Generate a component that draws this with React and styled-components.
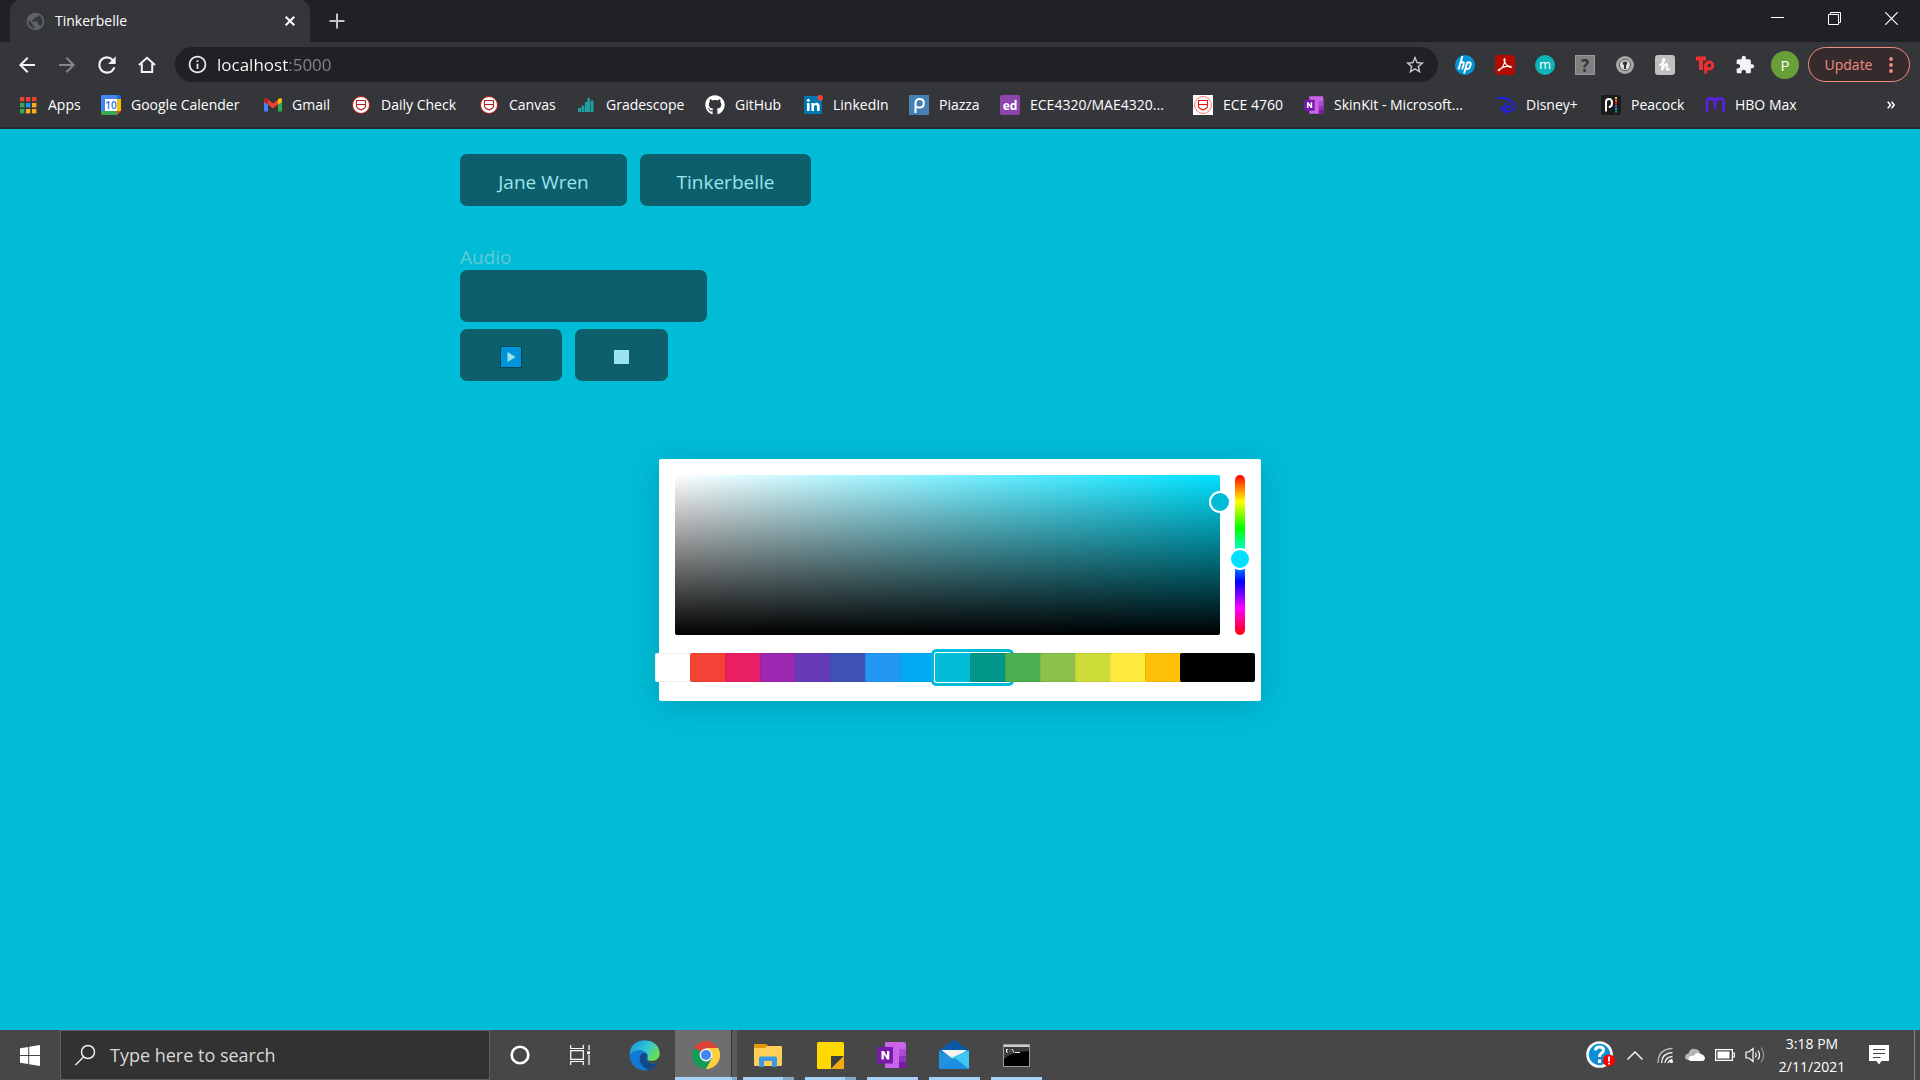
import React, { useState } from "react";
import styled, { createGlobalStyle, css } from "styled-components";
import { FaGithub } from "react-icons/fa";
import {
  MdArrowBack,
  MdArrowForward,
  MdExtension,
  MdInfoOutline,
  MdPublic,
  MdRefresh,
  MdStarBorder,
} from "react-icons/md";

const Global = createGlobalStyle`
  *, *::before, *::after { box-sizing: border-box; }
  html, body, #root { height: 100%; }
  body { margin: 0; background: #00bcd7; }
  body, button, input { font-family: "Open Sans", "Noto Sans", sans-serif; }
  svg { display: block; flex: none; }
`;

const Screen = styled.div`
  display: flex;
  flex-direction: column;
  min-height: 100%;
`;

const bareButton = css`
  display: flex;
  align-items: center;
  justify-content: center;
  flex: none;
  border: 0;
  padding: 0;
  background: none;
  color: inherit;
`;

/* ---------- browser frame ---------- */

const TabStrip = styled.header`
  display: flex;
  align-items: stretch;
  height: 42px;
  padding-left: 10px;
  background: #202124;
  color: #fff;
`;

const Tab = styled.div`
  display: flex;
  align-items: center;
  width: 300px;
  padding: 0 8px 0 15px;
  border-radius: 10px 10px 0 0;
  background: #35363a;
  color: #5f6368;
`;

const TabTitle = styled.span`
  flex: 1;
  margin-left: 9px;
  font-size: 14px;
  line-height: 20px;
  color: #fff;
`;

const IconButton = styled.button`
  ${bareButton}
  width: ${(p) => p.$width}px;
  height: ${(p) => p.$height || p.$width}px;
  color: ${(p) => p.$color || "#f1f3f4"};
`;

const WindowButtons = styled.div`
  display: flex;
  margin-left: auto;
`;

const Toolbar = styled.div`
  display: flex;
  align-items: center;
  height: 45px;
  padding: 0 10px 0 7px;
  background: #35363a;
`;

const AddressBar = styled.label`
  display: flex;
  flex: 1;
  align-items: center;
  height: 35px;
  margin: 0 7px 0 8px;
  padding: 0 3px 0 12px;
  border-radius: 18px;
  background: #202124;
  color: #e8eaed;
`;

const AddressInput = styled.input`
  flex: 1;
  min-width: 0;
  margin-left: 9px;
  padding: 0;
  border: 0;
  outline: 0;
  color: #fff;
  font-size: 17px;
  line-height: 24px;
  background: linear-gradient(90deg, #fff 71px, #85888c 71px);
  background-clip: text;
  -webkit-background-clip: text;
  -webkit-text-fill-color: transparent;
`;

const Avatar = styled.span`
  display: flex;
  align-items: center;
  justify-content: center;
  width: 28px;
  height: 28px;
  border-radius: 50%;
  background: #689f38;
  color: #fff;
  font-size: 15px;
`;

const UpdateButton = styled.button`
  ${bareButton}
  gap: 17px;
  width: 102px;
  height: 35px;
  margin-left: 3px;
  border: 1px solid #f28b82;
  border-radius: 18px;
  background: #352b2d;
  color: #f28b82;
  font-size: 14px;
  font-weight: 500;
`;

const Bookmarks = styled.nav`
  display: flex;
  align-items: center;
  gap: 20px;
  height: 42px;
  padding: 0 17px 4px 18px;
  background: #35363a;
  border-bottom: 2px solid #292a2d;
`;

const Bookmark = styled.a`
  display: flex;
  align-items: center;
  gap: 10px;
  flex: none;
  color: #fff;
  font-size: 14px;
  line-height: 20px;
  text-decoration: none;
  white-space: nowrap;
`;

const BookmarkLabel = styled.span`
  width: ${(p) => p.$width}px;
`;

const More = styled.button`
  ${bareButton}
  width: 24px;
  height: 24px;
  margin-left: auto;
  color: #fff;
`;

/* ---------- page ---------- */

const Page = styled.main`
  flex: 1;
  width: 100%;
  max-width: 1000px;
  margin: 0 auto;
  padding: 25px 0;
`;

const ButtonRow = styled.div`
  display: flex;
  gap: 13px;
  margin-top: ${(p) => p.$top || 0}px;
`;

const ActionButton = styled.button`
  ${bareButton}
  width: ${(p) => p.$width}px;
  height: 52px;
  padding-top: 4px;
  border-radius: 7px;
  background: #0d5f6c;
  color: #99e4ef;
  font-size: 19px;
  font-weight: 500;
`;

const AudioField = styled.label`
  display: block;
  width: 247px;
  margin-top: 38px;
  color: #66c8d3;
  font-size: 19px;
  font-weight: 500;
  line-height: 26px;
`;

const AudioInput = styled.input`
  display: block;
  width: 100%;
  height: 52px;
  padding: 0 20px;
  border: 0;
  border-radius: 7px;
  outline: 0;
  background: #0d5f6c;
  color: #99e4ef;
  font-size: 19px;
`;

const Picker = styled.section`
  width: 602px;
  margin: 78px auto 0;
  padding: 16px 16px 19px;
  border-radius: 2px;
  background: #fff;
  box-shadow: 0 5px 32px rgba(0, 20, 40, 0.16);
`;

const PickerTop = styled.div`
  display: flex;
  gap: 15px;
`;

const Palette = styled.div`
  position: relative;
  width: 545px;
  height: 160px;
  border-radius: 2px;
  background: linear-gradient(to top, #000, transparent),
    linear-gradient(to right, #fff, #00e1ff);
`;

const Handle = styled.span`
  position: absolute;
  left: 100%;
  top: 17%;
  width: 22px;
  height: 22px;
  border: 2px solid #fff;
  border-radius: 50%;
  background: #00bcd7;
  transform: translate(-50%, -50%);
`;

const HueSlider = styled.input`
  writing-mode: vertical-lr;
  appearance: none;
  width: 10px;
  height: 160px;
  margin: 0;
  border-radius: 5px;
  background: linear-gradient(#f00, #ff0, #0f0, #0ff, #00f, #f0f, #f00);
  &::-webkit-slider-runnable-track {
    width: 10px;
  }
  &::-webkit-slider-thumb {
    appearance: none;
    width: 22px;
    height: 22px;
    margin-left: -6px;
    border: 2px solid #fff;
    border-radius: 50%;
    background: #00e1ff;
  }
`;

const Swatches = styled.div`
  display: flex;
  margin: 18px 4px 0 -20px;
`;

const Swatch = styled.button`
  flex: none;
  width: 75px;
  height: 29px;
  margin-right: -40px;
  padding: 0;
  border: 0;
  border-radius: 2px;
  background: ${(p) => p.$color};
  box-shadow: ${(p) =>
    p.$active
      ? `0 0 0 1px #fff, 0 0 0 4px ${p.$color}`
      : "inset 0 0 0 1px rgba(0, 0, 0, 0.06)"};
`;

/* ---------- taskbar ---------- */

const Taskbar = styled.footer`
  display: flex;
  align-items: stretch;
  height: 50px;
  background: #474747;
  color: #fff;
`;

const TaskSearch = styled.label`
  display: flex;
  align-items: center;
  gap: 14px;
  width: 430px;
  padding-left: 13px;
  border: 1px solid #5f5f5f;
  background: #323232;
`;

const TaskInput = styled.input`
  flex: 1;
  min-width: 0;
  padding: 0;
  border: 0;
  outline: 0;
  background: none;
  color: #d8d8d8;
  font-size: 18px;
  &::placeholder {
    color: #d8d8d8;
    opacity: 1;
  }
`;

const SystemButton = styled.button`
  ${bareButton}
  width: 60px;
`;

const Apps = styled.div`
  display: flex;
  margin-left: 3px;
`;

const AppButton = styled.button`
  ${bareButton}
  flex-direction: column;
  justify-content: flex-end;
  width: 62px;
  background: ${(p) =>
    p.$active ? "linear-gradient(90deg, #6e6e6e 56px, #333 56px, #333 57px, #5a5a5a 57px)" : "none"};
`;

const AppIcon = styled.span`
  display: flex;
  flex: 1;
  align-items: center;
  padding-top: 3px;
`;

const RunningLine = styled.span`
  width: ${(p) => (p.$wide ? 62 : 51)}px;
  height: 3px;
  background: ${(p) =>
    p.$kind === "none"
      ? "transparent"
      : p.$kind === "group"
      ? `linear-gradient(90deg, #a6d2fa calc(100% - ${p.$wide ? 5 : 11}px), #83a9ca calc(100% - ${p.$wide ? 5 : 11}px))`
      : "#a6d2fa"};
`;

const Tray = styled.div`
  display: flex;
  margin-left: auto;
`;

const TrayButton = styled.button`
  ${bareButton}
  width: ${(p) => p.$width || 30}px;
`;

const Clock = styled.time`
  width: 84px;
  padding-top: 2px;
  text-align: center;
  font-size: 14px;
  line-height: 23px;
`;

const ShowDesktop = styled.button`
  ${bareButton}
  width: 6px;
  margin-left: 10px;
  border-left: 1px solid #8a8a8a;
`;

/* ---------- drawings ---------- */

const Svg = ({ w = 20, h, children }) => (
  <svg width={w} height={h || w} viewBox={`0 0 ${w} ${h || w}`} fill="none" aria-hidden="true">
    {children}
  </svg>
);

const Letter = ({ x, y, size, color = "#fff", weight = 700, children }) => (
  <text x={x} y={y} fontSize={size} fontWeight={weight} fill={color} textAnchor="middle" fontFamily="Open Sans, sans-serif">
    {children}
  </text>
);

const AppsGrid = () => (
  <Svg>
    {["#ea4335", "#ea4335", "#ea4335", "#34a853", "#2196f3", "#fbab1c", "#34a853", "#fbab1c", "#fbab1c"].map((c, i) => (
      <rect key={i} x={2 + (i % 3) * 6} y={2 + Math.floor(i / 3) * 6} width="4.4" height="4.4" fill={c} />
    ))}
  </Svg>
);

const CalendarIcon = () => (
  <Svg>
    <path d="M1 0H16V4H4V16H0V1Z" fill="#4285f4" />
    <path d="M16 0H19L20 1V4H16Z" fill="#1967d2" />
    <path d="M16 4H20V16H16Z" fill="#fbbc04" />
    <path d="M0 16H16V20H1L0 19Z" fill="#34a853" />
    <path d="M16 16H20L16 20Z" fill="#ea4335" />
    <path d="M4 4H16V16H4Z" fill="#fff" />
    <Letter x={10} y={14} size={10} color="#1a73e8" weight={600}>10</Letter>
  </Svg>
);

const GmailIcon = () => (
  <Svg>
    <path d="M2 6V16.5H6V9Z" fill="#4285f4" />
    <path d="M16 9V16.5H20V6Z" fill="#34a853" />
    <path d="M2 5Q2 3 4 3L6 4.5V9.5L2 7Z" fill="#c5221f" />
    <path d="M16 4.500L18 3Q20 3 20 5V7L16 9.500Z" fill="#fbbc04" />
    <path d="M6 4.500L11 8.500L16 4.500V9.500L11 13.500L6 9.500Z" fill="#ea4335" />
  </Svg>
);

const CrestIcon = ({ square }) => (
  <Svg>
    {square && <rect width="20" height="20" fill="#fff" />}
    <circle cx="10" cy="10" r="8.5" fill="#fff" stroke={square ? "#f77" : "#b31b1b"} strokeWidth="1" />
    <path d="M5.500 5.500H14.500V11.500Q14.500 13 10 15Q5.500 13 5.500 11.500ZM5.500 9.500H14.500" fill="#fff" stroke={square ? "#e11" : "#b31b1b"} strokeWidth="1.100" />
  </Svg>
);

const GradescopeIcon = () => (
  <Svg>
    <path d="M2 13H5V17H2ZM5.500 10.500H8.500V17H5.500ZM9 7H12V17H9ZM11.500 3H14V17H11.500ZM14.500 5.500H17.500V17H14.500Z" fill="#1fa0a0" />
  </Svg>
);

const LinkedInIcon = () => (
  <Svg>
    <rect x="1" y="1" width="18" height="18" rx="1" fill="#0077b5" />
    <path d="M4 8H6.6V16H4ZM8.4 8H10.9V9.2Q11.8 7.8 13.6 7.8Q16.6 7.8 16.6 11.3V16H14V11.8Q14 10 12.6 10Q11 10 11 12V16H8.4Z" fill="#fff" />
    <circle cx="5.3" cy="5.3" r="1.5" fill="#fff" />
    <circle cx="17.2" cy="2.7" r="2.800" fill="#f44336" />
  </Svg>
);

const PiazzaIcon = () => (
  <Svg>
    <rect width="20" height="20" fill="#4380b4" />
    <path d="M6.5 18V8.5Q6.5 4 10.5 4Q14.8 4 14.8 8.2Q14.8 12.5 10.5 12.5Q8.5 12.5 7 11.5" stroke="#fff" strokeWidth="2" />
  </Svg>
);

const EdIcon = () => (
  <Svg>
    <rect width="20" height="20" rx="2" fill="#8e44ad" />
    <Letter x={10} y={15} size={12}>ed</Letter>
  </Svg>
);

const OneNoteIcon = ({ size = 20 }) => (
  <svg width={size} height={size} viewBox="0 0 30 30" aria-hidden="true">
    <path d="M9 2H27Q29 2 29 4V26Q29 28 27 28H9Q8 28 8 27V3Q8 2 9 2Z" fill="#ca64ea" />
    <path d="M22 9H29V16H22Z" fill="#ae4bd5" />
    <path d="M22 16H29V22H22Z" fill="#9332bf" />
    <path d="M22 22H29V26Q29 28 27 28H22Z" fill="#7719aa" />
    <rect x="0" y="7" width="16" height="16.500" rx="1" fill="#7719aa" />
    <path d="M4.500 19.500V11H7L10 16V11H12.300V19.500H10L6.800 14.300V19.500Z" fill="#fff" />
  </svg>
);

const DisneyIcon = () => (
  <Svg>
    <path d="M1 3.500Q9 1 16 7Q21 12 17 15Q13 18 6 15Q4 12 10 12Q13 12 14 11M10 7V18" stroke="#2020e8" strokeWidth="1.800" strokeLinecap="round" />
  </Svg>
);

const PeacockIcon = () => (
  <Svg>
    <rect width="20" height="20" rx="2" fill="#1b1b1b" />
    <path d="M5 16.500V7Q5 4 8 4Q11 4 11 8Q11 12 7.800 12" stroke="#fff" strokeWidth="2" />
    {["#fbc02d", "#ff7112", "#ef1541", "#6e55dc", "#05a2ff", "#05ac3f"].map((c, i) => (
      <rect key={c} x="14" y={2 + i * 2.700} width="2" height="2" fill={c} />
    ))}
  </Svg>
);

const HboIcon = () => (
  <Svg>
    <path d="M2 17V7Q2 3.500 5.500 3.500Q10 3.500 10 8V14V8Q10 3.500 14.500 3.500Q18.500 3.500 18.500 7V17" stroke="#5a1fe0" strokeWidth="2.800" />
  </Svg>
);

const HpIcon = () => (
  <Svg>
    <circle cx="10" cy="10" r="10" fill="#0096d6" />
    <path d="M7.500 1L3.500 14.500M5.700 8Q9.500 6 8.800 9L7 14.500M9 18.500L12.300 7.500H14.500Q16.300 7.500 15.600 9.700L14.800 12.300Q14.200 14 12.500 14H11" stroke="#fff" strokeWidth="1.900" />
  </Svg>
);

const AcrobatIcon = () => (
  <Svg>
    <rect width="20" height="20" rx="3" fill="#b30b00" />
    <path d="M4 15.500Q9 12 10 5Q10 3 9 4.500Q9 8 14 12Q17 13 16 11.500Q12 10 4 14.500Q2.500 16 4 15.500Z" stroke="#fff" strokeWidth="1.200" />
  </Svg>
);

const MendeleyIcon = () => (
  <Svg>
    <circle cx="10" cy="10" r="10" fill="#0cb4b8" />
    <Letter x={10} y={14} size={13} weight={500}>m</Letter>
  </Svg>
);

const QuestionIcon = () => (
  <Svg>
    <rect x=".5" y=".5" width="19" height="19" fill="#808080" stroke="#999" />
    <Letter x={10} y={16.500} size={17} color="#35363a">?</Letter>
  </Svg>
);

const KeyholeIcon = () => (
  <Svg>
    <circle cx="10" cy="10" r="9" fill="#a5a5a5" />
    <circle cx="10" cy="10" r="5.500" fill="#ddd" stroke="#555" strokeWidth="1" />
    <path d="M10 6.500A1.800 1.800 0 0 1 11 10V14H9V10A1.800 1.800 0 0 1 10 6.500Z" fill="#333" />
  </Svg>
);

const HoneyIcon = () => (
  <Svg>
    <rect width="20" height="20" rx="3" fill="#c0c0c0" />
    <path d="M5 10Q9 8 9.500 5Q9 2.500 8 5L7 15.500Q10 8 12 9Q13 10 11.500 13Q11 16 14.500 14" stroke="#fff" strokeWidth="1.800" strokeLinecap="round" />
  </Svg>
);

const TpIcon = () => (
  <Svg>
    <path d="M1 1.500H11V5.500H8V15H4V5.500H1Z" fill="#f03030" />
    <circle cx="14.200" cy="10.500" r="3.500" stroke="#f03030" strokeWidth="3" />
    <path d="M9.200 9H12.200V18.500H9.200Z" fill="#f03030" />
  </Svg>
);

const HomeIcon = () => (
  <Svg>
    <path d="M2 10L10 2.800L18 10M4.800 8.500V17H15.200V8.500" stroke="#f1f3f4" strokeWidth="2" />
  </Svg>
);

const WindowsLogo = () => (
  <Svg w={20} h={21}>
    <path d="M0 3.200L8.200 2V10H0ZM9.200 1.800L20 0V10H9.200ZM0 11H8.200V19L0 17.800ZM9.200 11H20V21L9.200 19.200Z" fill="#fff" />
  </Svg>
);

const SearchGlass = () => (
  <Svg w={22}>
    <circle cx="14" cy="8" r="6.500" stroke="#eee" strokeWidth="1.500" />
    <path d="M9.500 13L1.500 21" stroke="#eee" strokeWidth="1.500" />
  </Svg>
);

const TaskViewIcon = () => (
  <Svg>
    <path d="M.7 0V3.500H13.300V0M.7 20V16.500H13.300V20M.7 5.700H13.300V14.300H.7ZM19 0V5M19 10V20" stroke="#fff" strokeWidth="1.200" />
    <rect x="17.200" y="6.300" width="3" height="3" fill="#fff" />
  </Svg>
);

const EdgeIcon = () => (
  <svg width="31" height="31" viewBox="0 0 31 31" aria-hidden="true">
    <defs>
      <linearGradient id="edgeTop" x1="0" y1="0" x2="1" y2=".5">
        <stop offset=".1" stopColor="#1c98dc" />
        <stop offset=".6" stopColor="#35c5d8" />
        <stop offset="1" stopColor="#67e04f" />
      </linearGradient>
    </defs>
    <circle cx="15.500" cy="15.500" r="15" fill="#1278d0" />
    <path d="M.5 14Q2 .5 16 .5Q30 1 30.700 14Q30 21 23 21Q18 21 18.500 18.500Q20 15 17 12.500Q10 7 .5 14Z" fill="url(#edgeTop)" />
    <path d="M10.500 18Q11 28 21 30Q27 27.500 29 22Q24 25 20 22.500Q17 20 18 17Q18 13 14.500 13Q11 14 10.500 18Z" fill="#114a8b" />
    <path d="M18.500 18.500Q18 21 23 21Q28 21 30.500 16.500L31 23L28 22.500Q24 25 20 22.500Z" fill="#474747" />
  </svg>
);

const ChromeIcon = () => (
  <svg width="28" height="28" viewBox="0 0 28 28" aria-hidden="true">
    <path d="M14 14L1.900 7A14 14 0 0 1 26.100 7Z" fill="#db4437" />
    <path d="M14 14L26.100 7A14 14 0 0 1 14 28L12 27Z" fill="#ffcd40" />
    <path d="M14 14L20 17.500L14 28A14 14 0 0 1 1.900 7Z" fill="#0f9d58" />
    <path d="M14 7H26.100A14 14 0 0 1 14 28L20 17.500Z" fill="#ffcd40" />
    <circle cx="14" cy="14" r="6.400" fill="#f1f1f1" />
    <circle cx="14" cy="14" r="5" fill="#4285f4" />
  </svg>
);

const ExplorerIcon = () => (
  <Svg w={28} h={25}>
    <path d="M0 2Q0 1 1 1H11L14 3H27Q28 3 28 4V22Q28 23 27 23H1Q0 23 0 22Z" fill="#ffcf57" />
    <path d="M0 5V2Q0 1 1 1H11L13.500 2.500L11 5Z" fill="#e09a08" />
    <path d="M5 24V15Q5 13.500 6.500 13.500H21.500Q23 13.500 23 15V24H18V18H10V24Z" fill="#3a98de" />
  </Svg>
);

const StickyIcon = () => (
  <Svg w={27}>
    <rect width="27" height="27" rx="1.500" fill="#ffd800" />
    <path d="M14 27V14H27Z" fill="#3d3d3d" />
    <path d="M14 27L27 14V25.500Q27 27 25.500 27Z" fill="#f2ab13" />
  </Svg>
);

const MailIcon = () => (
  <Svg w={30}>
    <path d="M0 10L15 0L30 10L15 20Z" fill="#0a59a8" />
    <path d="M2 10H28L15 20Z" fill="#f3f3f3" />
    <path d="M0 10L30 29H1Q0 29 0 28Z" fill="#2493df" />
    <path d="M30 10V28Q30 29 29 29L12 18Z" fill="#3fc8f4" />
    <path d="M0 29L16 18L30 29Z" fill="#1d8fe0" />
  </Svg>
);

const TerminalIcon = () => (
  <Svg w={27} h={23}>
    <rect x=".5" y=".5" width="26" height="22" fill="#000" stroke="#9a9a9a" />
    <path d="M1 1H26V3H1Z" fill="#ccc" />
    <path d="M1 3H26V7Q8 8 1 15Z" fill="#3a3a3a" />
    <path d="M5 5.500H3.500V8H5M7 5.500V6M7 7.500V8M9 5L11 8.500M12 8.500H17" stroke="#eee" strokeWidth="1" />
  </Svg>
);

const HelpTrayIcon = () => (
  <Svg w={30} h={28}>
    <circle cx="13.500" cy="13.500" r="12" fill="#0d8ed6" stroke="#fff" strokeWidth="2.600" />
    <path d="M9.500 9.500Q9.500 6 13.500 6Q17.500 6 17.500 9Q17.500 11 15 12.500Q13.500 13.500 13.500 16M13.500 18.500V22" stroke="#fff" strokeWidth="3" />
    <circle cx="23" cy="19.500" r="6" fill="#f00" />
    <path d="M23 15.500V20.500M23 21.700V23.500" stroke="#fff" strokeWidth="1.800" />
  </Svg>
);

const WifiIcon = () => (
  <Svg w={17}>
    <path d="M1 16Q1 2 15.500 1.500" stroke="#bbb" strokeWidth="1.300" />
    <path d="M4.500 16Q5 6 15.500 5.500M8 16Q8.500 10 15.500 9.500M11 16Q12 13 15.500 12.500" stroke="#eee" strokeWidth="1.300" />
    <circle cx="14.500" cy="14.500" r="1.600" fill="#fff" />
  </Svg>
);

const CloudIcon = () => (
  <Svg w={20} h={14}>
    <path d="M3 12Q0 12 0 9Q0 6 3.500 5.500Q5 0 10 1Q14 1 15 5L7 12Z" fill="#b5b5b5" />
    <path d="M5 13Q3 12 3.500 10Q5 7 8.500 8Q11 3.500 15 5.500Q20 7 20 10.500Q19.500 13 17 13Z" fill="#fff" />
  </Svg>
);

const BatteryIcon = () => (
  <Svg w={20} h={12}>
    <path d="M.6.600H17.400V11.400H.6ZM17.400 4H19.300V8H17.400" stroke="#fff" strokeWidth="1.200" />
    <rect x="2.500" y="2.500" width="12" height="7" fill="#fff" />
  </Svg>
);

const VolumeIcon = () => (
  <Svg w={20} h={18}>
    <path d="M1 6H4L8 2.500V15.500L4 12H1ZM10.500 6.500Q12 9 10.500 11.500M13 4.500Q16 9 13 13.500" stroke="#fff" strokeWidth="1.200" />
    <path d="M16 1.500Q21.500 9 16 16.500" stroke="#999" strokeWidth="1.200" />
  </Svg>
);

const NotificationIcon = () => (
  <Svg w={20}>
    <path d="M0 0H20V16H12.500L10 19.500L7.500 16H0Z" fill="#fff" />
    <path d="M4 4.500H16M4 8.500H16M4 12.500H11.500" stroke="#474747" strokeWidth="1.200" />
  </Svg>
);

const bookmarks = [
  ["Apps", 33, <AppsGrid />],
  ["Google Calender", 111, <CalendarIcon />],
  ["Gmail", 39, <GmailIcon />],
  ["Daily Check", 78, <CrestIcon />],
  ["Canvas", 47, <CrestIcon />],
  ["Gradescope", 79, <GradescopeIcon />],
  ["GitHub", 48, <FaGithub size={20} />],
  ["LinkedIn", 56, <LinkedInIcon />],
  ["Piazza", 41, <PiazzaIcon />],
  ["ECE4320/MAE4320...", 143, <EdIcon />],
  ["ECE 4760", 61, <CrestIcon square />],
  ["SkinKit - Microsoft...", 142, <OneNoteIcon />],
  ["Disney+", 55, <DisneyIcon />],
  ["Peacock", 54, <PeacockIcon />],
  ["HBO Max", 64, <HboIcon />],
];

const extensions = [
  ["HP", <HpIcon />],
  ["Acrobat", <AcrobatIcon />],
  ["Mendeley", <MendeleyIcon />],
  ["Question", <QuestionIcon />],
  ["Passwords", <KeyholeIcon />],
  ["Honey", <HoneyIcon />],
  ["Toolbox", <TpIcon />],
  ["Extensions", <MdExtension size={20} />],
];

const swatches = [
  "#ffffff", "#f44336", "#e91e63", "#9c27b0", "#673ab7", "#3f51b5", "#2196f3", "#03a9f4",
  "#00bcd7", "#009688", "#4caf50", "#8bc34a", "#cddc39", "#ffeb3b", "#ffc107", "#000000",
];

const taskApps = [
  ["Edge", "none", <EdgeIcon />],
  ["Chrome", "group", <ChromeIcon />],
  ["File Explorer", "group", <ExplorerIcon />],
  ["Sticky Notes", "group", <StickyIcon />],
  ["OneNote", "single", <OneNoteIcon size={30} />],
  ["Mail", "single", <MailIcon />],
  ["Command Prompt", "single", <TerminalIcon />],
];

export default function App() {
  const [url, setUrl] = useState("localhost:5000");
  const [hue, setHue] = useState(53);
  const [color, setColor] = useState("#00bcd7");

  return (
    <Screen>
      <Global />
      <TabStrip>
        <Tab>
          <MdPublic size={21} />
          <TabTitle>Tinkerbelle</TabTitle>
          <IconButton $width={24} aria-label="Close tab">
            <Svg w={10}><path d="M.7.700L9.300 9.300M9.300.700L.7 9.300" stroke="#fff" strokeWidth="2" /></Svg>
          </IconButton>
        </Tab>
        <IconButton $width={54} $height={42} aria-label="New tab">
          <Svg w={16}><path d="M8 .500V15.500M.5 8H15.500" stroke="#c4c7ca" strokeWidth="2" /></Svg>
        </IconButton>
        <WindowButtons>
          <IconButton $width={57} $height={36} aria-label="Minimize">
            <Svg w={13}><path d="M0 5.500H13" stroke="#fff" /></Svg>
          </IconButton>
          <IconButton $width={57} $height={36} aria-label="Restore">
            <Svg w={13}><path d="M.5 2.500H10.500V12.500H.5ZM2.500 2.500V.500H12.500V10.500H10.500" stroke="#fff" /></Svg>
          </IconButton>
          <IconButton $width={57} $height={36} aria-label="Close window">
            <Svg w={13}><path d="M.3.300L12.700 12.700M12.700.300L.3 12.700" stroke="#fff" strokeWidth="1.200" /></Svg>
          </IconButton>
        </WindowButtons>
      </TabStrip>

      <Toolbar>
        <IconButton $width={40} aria-label="Back"><MdArrowBack size={24} /></IconButton>
        <IconButton $width={40} $color="#85868a" aria-label="Forward"><MdArrowForward size={24} /></IconButton>
        <IconButton $width={40} aria-label="Reload"><MdRefresh size={26} /></IconButton>
        <IconButton $width={40} aria-label="Home"><HomeIcon /></IconButton>
        <AddressBar>
          <MdInfoOutline size={21} />
          <AddressInput aria-label="Address" value={url} spellCheck={false} onChange={(e) => setUrl(e.target.value)} />
          <IconButton $width={40} $height={35} $color="#c4c7ca" aria-label="Bookmark this page"><MdStarBorder size={22} /></IconButton>
        </AddressBar>
        {extensions.map(([name, icon]) => (
          <IconButton key={name} $width={40} aria-label={name}>{icon}</IconButton>
        ))}
        <IconButton $width={40} aria-label="Profile"><Avatar>P</Avatar></IconButton>
        <UpdateButton>
          Update
          <Svg w={4} h={16}>
            <circle cx="2" cy="2" r="1.900" fill="#f28b82" />
            <circle cx="2" cy="8" r="1.900" fill="#f28b82" />
            <circle cx="2" cy="14" r="1.900" fill="#f28b82" />
          </Svg>
        </UpdateButton>
      </Toolbar>

      <Bookmarks aria-label="Bookmarks">
        {bookmarks.map(([name, width, icon]) => (
          <Bookmark key={name} href="#">
            {icon}
            <BookmarkLabel $width={width}>{name}</BookmarkLabel>
          </Bookmark>
        ))}
        <More aria-label="More bookmarks">
          <Svg w={8}><path d="M.7.700L3.500 4L.7 7.300M4.500.700L7.300 4L4.500 7.300" stroke="#fff" strokeWidth="1.500" /></Svg>
        </More>
      </Bookmarks>

      <Page>
        <ButtonRow>
          <ActionButton $width={167}>Jane Wren</ActionButton>
          <ActionButton $width={171}>Tinkerbelle</ActionButton>
        </ButtonRow>
        <AudioField>
          Audio
          <AudioInput type="text" />
        </AudioField>
        <ButtonRow $top={7}>
          <ActionButton $width={102} aria-label="Play">
            <Svg w={22}>
              <rect x=".5" y=".5" width="21" height="21" fill="#0093d9" stroke="#0a4650" />
              <path d="M7.500 6V16L15.500 11Z" fill="#99e4ef" />
            </Svg>
          </ActionButton>
          <ActionButton $width={93} aria-label="Stop">
            <Svg w={15}><rect width="15" height="14" fill="#99e4ef" /></Svg>
          </ActionButton>
        </ButtonRow>
        <Picker aria-label="Color picker">
          <PickerTop>
            <Palette><Handle /></Palette>
            <HueSlider type="range" min="0" max="100" aria-label="Hue" value={hue} onChange={(e) => setHue(Number(e.target.value))} />
          </PickerTop>
          <Swatches>
            {swatches.map((c) => (
              <Swatch key={c} $color={c} $active={c === color} aria-label={c} onClick={() => setColor(c)} />
            ))}
          </Swatches>
        </Picker>
      </Page>

      <Taskbar>
        <SystemButton aria-label="Start"><WindowsLogo /></SystemButton>
        <TaskSearch>
          <SearchGlass />
          <TaskInput type="text" placeholder="Type here to search" aria-label="Type here to search" />
        </TaskSearch>
        <SystemButton aria-label="Cortana">
          <Svg w={20}><circle cx="10" cy="10" r="8.300" stroke="#fff" strokeWidth="2.600" /></Svg>
        </SystemButton>
        <SystemButton aria-label="Task view"><TaskViewIcon /></SystemButton>
        <Apps>
          {taskApps.map(([name, kind, icon]) => (
            <AppButton key={name} $active={name === "Chrome"} aria-label={name}>
              <AppIcon>{icon}</AppIcon>
              <RunningLine $kind={kind} $wide={name === "Chrome"} />
            </AppButton>
          ))}
        </Apps>
        <Tray>
          <TrayButton $width={38} aria-label="Support"><HelpTrayIcon /></TrayButton>
          <TrayButton aria-label="Show hidden icons">
            <Svg w={16} h={9}><path d="M.5 8.500L8 1L15.500 8.500" stroke="#fff" strokeWidth="1.400" /></Svg>
          </TrayButton>
          <TrayButton aria-label="Network"><WifiIcon /></TrayButton>
          <TrayButton aria-label="OneDrive"><CloudIcon /></TrayButton>
          <TrayButton aria-label="Battery"><BatteryIcon /></TrayButton>
          <TrayButton aria-label="Volume"><VolumeIcon /></TrayButton>
          <Clock>3:18 PM<br />2/11/2021</Clock>
          <TrayButton $width={50} aria-label="Notifications"><NotificationIcon /></TrayButton>
          <ShowDesktop aria-label="Show desktop" />
        </Tray>
      </Taskbar>
    </Screen>
  );
}
